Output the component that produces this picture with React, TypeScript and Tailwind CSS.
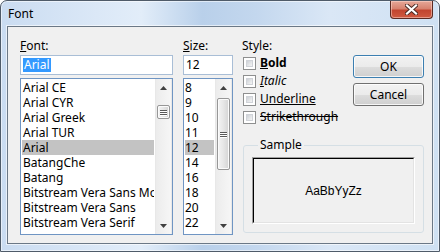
import React from "react";

const fontNames = [
  "Arial CE",
  "Arial CYR",
  "Arial Greek",
  "Arial TUR",
  "Arial",
  "BatangChe",
  "Batang",
  "Bitstream Vera Sans Mono",
  "Bitstream Vera Sans",
  "Bitstream Vera Serif",
];

const sizes = ["8", "9", "10", "11", "12", "14", "16", "18", "20", "22"];

function Arrow({ down }: { down?: boolean }) {
  return (
    <div className="flex h-[17px] items-center justify-center">
      <svg width="7" height="4" viewBox="0 0 7 4">
        <path d={down ? "M0 0 L7 0 L3.5 4Z" : "M0 4 L3.5 0 L7 4Z"} fill="#404040" />
      </svg>
    </div>
  );
}

function ScrollBar({ thumb }: { thumb: string }) {
  return (
    <div className="flex w-[17px] shrink-0 flex-col border-x border-[#e8e8e8] bg-gradient-to-r from-[#ececec] to-[#f6f6f6]">
      <Arrow />
      <div className="flex flex-1 flex-col">
        <div className={`mx-[1px] flex flex-col items-center justify-center gap-[1px] rounded-[2px] border border-[#979797] bg-gradient-to-r from-[#f4f4f4] via-[#e6e6e6] to-[#d4d4d4] shadow-[inset_0_0_0_1px_#fbfbfb] ${thumb}`}>
          <div className="h-[1px] w-[7px] bg-[#5a5a5a] shadow-[0_1px_0_#fff]" />
          <div className="h-[1px] w-[7px] bg-[#5a5a5a] shadow-[0_1px_0_#fff]" />
          <div className="h-[1px] w-[7px] bg-[#5a5a5a] shadow-[0_1px_0_#fff]" />
        </div>
      </div>
      <Arrow down />
    </div>
  );
}

function CheckRow({ children }: { children: React.ReactNode }) {
  return (
    <div className="flex h-[18px] items-center gap-[4px] pl-[1px]">
      <div className="h-[13px] w-[13px] border border-[#8e8f8f] bg-white p-[2px]">
        <div className="h-full w-full border border-[#d0d3d8] bg-gradient-to-br from-[#cdd1d6] to-[#f5f5f5]" />
      </div>
      <span className="leading-[16px]">{children}</span>
    </div>
  );
}

function Button({ label, isDefault }: { label: string; isDefault?: boolean }) {
  return (
    <div
      className={`flex h-[23px] w-[71px] items-center justify-center rounded-[3px] border bg-[linear-gradient(180deg,#f2f2f2_0%,#ebebeb_50%,#dddddd_51%,#cfcfcf_100%)] shadow-[inset_0_0_0_1px_rgba(255,255,255,0.8)] ${
        isDefault ? "border-[#3c7fb1] shadow-[inset_0_0_0_1px_#b8e3f8]" : "border-[#707070]"
      }`}
    >
      {label}
    </div>
  );
}

export default function App() {
  return (
    <div className="flex h-[252px] w-[440px] flex-col overflow-hidden rounded-t-[7px] border border-[#4f5b69] bg-[linear-gradient(90deg,#cadcf1_0%,#dbe8f7_22%,#e2edf9_32%,#b9d0ea_46%,#c3d7ee_58%,#dae7f6_75%,#cfe1f3_100%)] font-['Noto_Sans',sans-serif] text-[12px] text-black shadow-[inset_0_0_0_1px_rgba(255,255,255,0.55)]">
      {/* title bar */}
      <div className="flex h-[25px] items-start pr-[6px]">
        <span className="pl-[7px] pt-[5px] leading-[16px]">Font</span>
        <div className="ml-auto flex h-[18px] w-[43px] items-center justify-center rounded-b-[4px] border border-t-0 border-[#5b2a22] bg-[linear-gradient(180deg,#e6a899_0%,#d7826f_45%,#c2452f_55%,#cf5a41_100%)] shadow-[inset_0_0_0_1px_rgba(255,220,210,0.5)]">
          <svg width="13" height="11" viewBox="0 0 13 11">
            <path d="M2 1.5 L11 9.5 M11 1.5 L2 9.5" stroke="#4a2a24" strokeWidth="4" strokeLinecap="square" />
            <path d="M2 1.5 L11 9.5 M11 1.5 L2 9.5" stroke="#ffffff" strokeWidth="2.2" strokeLinecap="square" />
          </svg>
        </div>
      </div>

      {/* client area */}
      <div className="mx-[6px] flex h-[218px] gap-[10px] border border-[#6b7886] bg-[#f0f0f0] pl-[12px] pt-[11px] shadow-[0_0_0_1px_rgba(255,255,255,0.6)]">
        {/* font column */}
        <div className="flex w-[153px] flex-col">
          <div className="h-[16px] leading-[16px]">
            <span className="underline">F</span>ont:
          </div>
          <div className="mt-[1px] flex h-[20px] items-center border border-[#a9bed6] bg-white pl-[2px]">
            <span className="inline-block bg-[#3399ff] px-[1px] leading-[14px] text-white">Arial</span>
          </div>
          <div className="mt-[3px] flex h-[157px] border border-[#6f95c3] bg-white">
            <div className="flex min-w-0 flex-1 flex-col pt-[1px]">
              {fontNames.map((f) => (
                <div
                  key={f}
                  className={`mx-[1px] h-[15px] overflow-hidden whitespace-nowrap pl-[1px] leading-[15px] ${
                    f === "Arial" ? "bg-[#c3c3c3]" : ""
                  }`}
                >
                  {f}
                </div>
              ))}
            </div>
            <ScrollBar thumb="mt-[9px] h-[14px]" />
          </div>
        </div>

        {/* size column */}
        <div className="flex w-[50px] flex-col">
          <div className="h-[16px] leading-[16px]">
            <span className="underline">S</span>ize:
          </div>
          <div className="mt-[1px] flex h-[20px] items-center border border-[#a9bed6] bg-white pl-[2px] leading-[14px]">
            12
          </div>
          <div className="mt-[3px] flex h-[157px] border border-[#6f95c3] bg-white">
            <div className="flex min-w-0 flex-1 flex-col pt-[1px]">
              {sizes.map((s) => (
                <div
                  key={s}
                  className={`mx-[1px] h-[15px] leading-[15px] ${s === "12" ? "bg-[#c3c3c3]" : ""}`}
                >
                  {s}
                </div>
              ))}
            </div>
            <ScrollBar thumb="mt-[2px] h-[72px]" />
          </div>
        </div>

        {/* style column */}
        <div className="ml-[-1px] flex w-[182px] flex-col">
          <div className="h-[16px] leading-[16px]">Style:</div>
          <div className="flex">
            <div className="flex flex-col">
              <CheckRow>
                <span className="font-bold">
                  <span className="underline">B</span>old
                </span>
              </CheckRow>
              <CheckRow>
                <span className="italic">
                  <span className="underline">I</span>talic
                </span>
              </CheckRow>
              <CheckRow>
                <span className="underline">Underline</span>
              </CheckRow>
              <CheckRow>
                <span className="line-through">Strikethrough</span>
              </CheckRow>
            </div>
            <div className="ml-auto flex flex-col gap-[5px] pt-[1px]">
              <Button label="OK" isDefault />
              <Button label="Cancel" />
            </div>
          </div>
          <fieldset className="ml-[1px] mt-[11px] rounded-[3px] border border-[#d5dfe5] px-[8px] pb-[8px]">
            <legend className="ml-[6px] px-[2px] leading-[16px]">Sample</legend>
            <div className="mt-[4px] flex h-[67px] items-center justify-center border border-b-white border-l-[#a0a0a0] border-r-white border-t-[#a0a0a0]">
              <div className="flex h-full w-full items-center justify-center border border-b-[#e3e3e3] border-l-[#000] border-r-[#e3e3e3] border-t-[#000] font-['Liberation_Sans',Arial,sans-serif] text-[12px]">
                AaBbYyZz
              </div>
            </div>
          </fieldset>
        </div>
      </div>
    </div>
  );
}
